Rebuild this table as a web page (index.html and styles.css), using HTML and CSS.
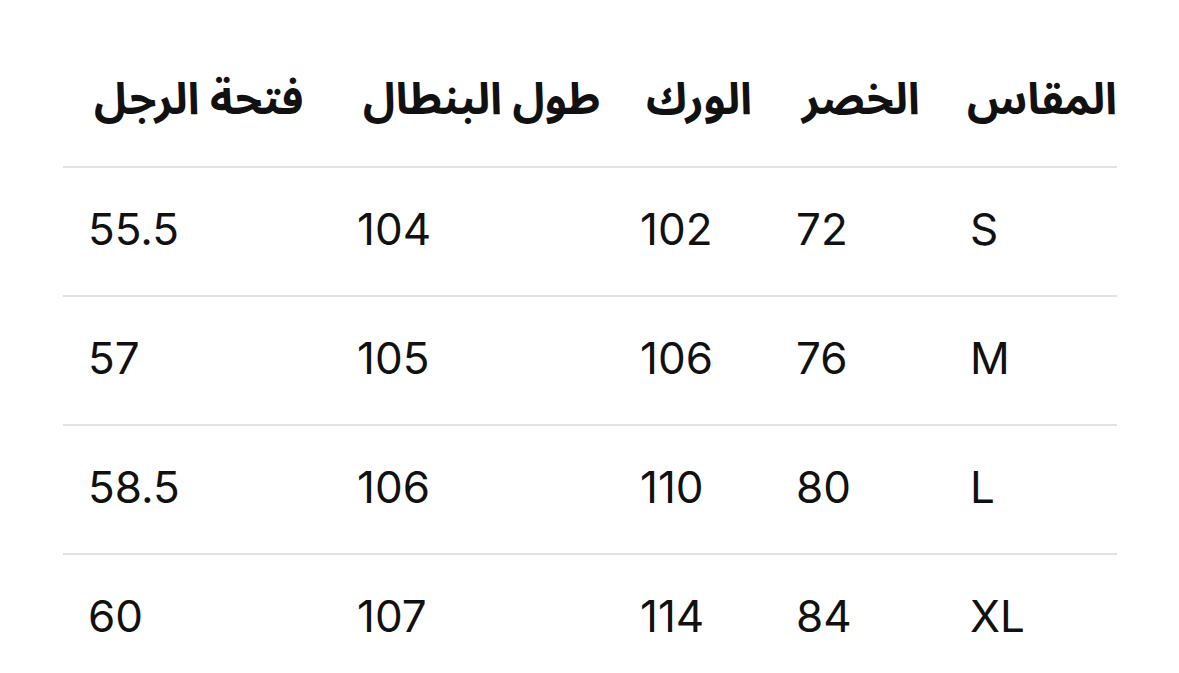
FILE: index.html
```html
<!DOCTYPE html>
<html lang="ar" dir="rtl">
<head>
<meta charset="utf-8">
<title>جدول المقاسات</title>
<link rel="stylesheet" href="styles.css">
</head>
<body>
<div class="wrap">
<table class="sizes">
  <colgroup>
    <col class="c1"><col class="c2"><col class="c3"><col class="c4"><col class="c5">
  </colgroup>
  <thead>
    <tr>
      <th>المقاس</th>
      <th>الخصر</th>
      <th>الورك</th>
      <th>طول البنطال</th>
      <th>فتحة الرجل</th>
    </tr>
  </thead>
  <tbody>
    <tr><td>S</td><td>72</td><td>102</td><td>104</td><td>55.5</td></tr>
    <tr><td>M</td><td>76</td><td>106</td><td>105</td><td>57</td></tr>
    <tr><td>L</td><td>80</td><td>110</td><td>106</td><td>58.5</td></tr>
    <tr><td>XL</td><td>84</td><td>114</td><td>107</td><td>60</td></tr>
  </tbody>
</table>
</div>
</body>
</html>
```
FILE: styles.css
```css
html, body {
  margin: 0;
  padding: 0;
  background: #ffffff;
}
body {
  font-family: Inter, "Noto Sans Arabic", "DejaVu Sans", sans-serif;
  color: #111111;
}
.wrap {
  padding: 33px 62px 0 63px;
}
.sizes {
  width: 1054px;
  border-collapse: collapse;
  table-layout: fixed;
  direction: rtl;
}
.c1 { width: 172px; }
.c2 { width: 174px; }
.c3 { width: 156px; }
.c4 { width: 283px; }
.c5 { width: 269px; }
.sizes th,
.sizes td {
  text-align: left;
  padding: 0 0 0 25px;
  white-space: nowrap;
}
.sizes th {
  height: 133px;
  font-size: 44px;
  font-weight: 700;
  vertical-align: middle;
  padding-left: 31px;
  border-bottom: 2px solid #e2e2e2;
}
.sizes td {
  height: 121px;
  font-size: 44px;
  font-weight: 400;
  vertical-align: middle;
  padding-bottom: 6px;
  border-bottom: 2px solid #e2e2e2;
}
```
